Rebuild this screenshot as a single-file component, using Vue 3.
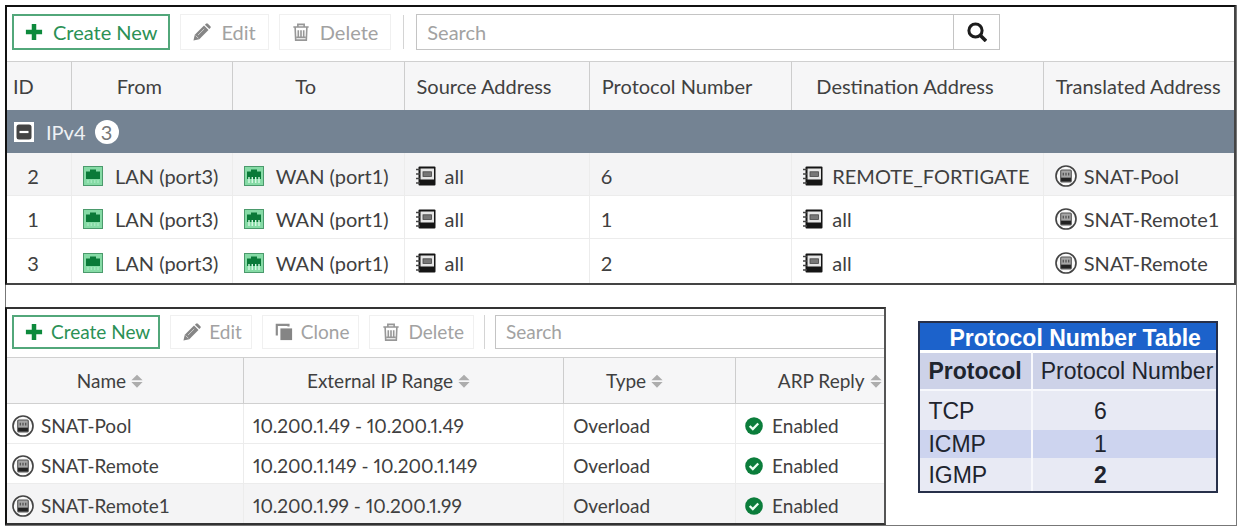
<script setup>
import { h } from 'vue'

const policies = [
  { id: 2, protocol: 6, destination: 'REMOTE_FORTIGATE', translated: 'SNAT-Pool' },
  { id: 1, protocol: 1, destination: 'all', translated: 'SNAT-Remote1' },
  { id: 3, protocol: 2, destination: 'all', translated: 'SNAT-Remote' },
]
const pools = [
  { name: 'SNAT-Pool', range: '10.200.1.49 - 10.200.1.49' },
  { name: 'SNAT-Remote', range: '10.200.1.149 - 10.200.1.149' },
  { name: 'SNAT-Remote1', range: '10.200.1.99 - 10.200.1.99' },
]
const poolColumns = ['Name', 'External IP Range', 'Type', 'ARP Reply']

const shapes = {
  plus: [['path', { d: 'M7.5 1h5v6.500H19v5h-6.500V19h-5v-6.500H1v-5h6.500z', fill: '#0d8a3c' }]],
  pencil: [
    ['path', { d: 'M0.500 19.500L2 13 12.200 2.800l5 5L7 18z', fill: '#858585' }],
    ['path', { d: 'M13.2 1.900L14.500.7q1-.9 2 0L19.300 3.500q.9 1 0 2L18.100 6.800z', fill: '#858585' }],
    ['path', { d: 'M5.500 13.500L12.500 6.500M3 14l3 3', stroke: '#d5d5d5', 'stroke-width': 1 }],
  ],
  trash: [
    ['path', { d: 'M1.500 4.500h17M6.500 4.500V1.500h7v3M3.500 5l.6 14h11.800L16.500 5M7 8v7M10 8v7M13 8v7M5 16h10', fill: 'none', stroke: '#979797', 'stroke-width': 1.8 }],
  ],
  clone: [
    ['path', { d: 'M2 14V2h13v2', fill: 'none', stroke: '#8c8c8c', 'stroke-width': 2.4 }],
    ['path', { d: 'M6 6h13v13H6z', fill: '#858585' }],
  ],
  search: [
    ['circle', { cx: 8.5, cy: 8.5, r: 6.6, fill: 'none', stroke: '#1c1c1c', 'stroke-width': 3 }],
    ['path', { d: 'M13 13l6 6', stroke: '#1c1c1c', 'stroke-width': 3.6 }],
  ],
  port: [
    ['rect', { x: 0.5, y: 0.5, width: 19, height: 19, fill: '#86dba6', stroke: '#4b9a6c' }],
    ['path', { d: 'M3 5.500h4V3.500h6v2h4V13H3z', fill: '#0a7a38' }],
    ['path', { d: 'M5 14v3M8.300 14v3M11.700 14v3M15 14v3', stroke: '#a5e8bf', 'stroke-width': 1.4 }],
  ],
  wan: [
    ['rect', { x: 0.5, y: 0.5, width: 19, height: 19, fill: '#86dba6', stroke: '#4b9a6c' }],
    ['path', { d: 'M3 5.500h4V3.500h6v2h4V13H3z', fill: '#0a7a38' }],
    ['path', { d: 'M5 11v6M8.300 11v6M11.700 11v6M15 11v6', stroke: '#d5f8e2', 'stroke-width': 1.4 }],
  ],
  book: [
    ['rect', { x: 2.5, y: 0.5, width: 17, height: 19, rx: 1, fill: '#151515' }],
    ['rect', { x: 4.500, y: 2.500, width: 13.500, height: 11, fill: '#e6e6e6' }],
    ['rect', { x: 7, y: 5.800, width: 8.500, height: 4.600, fill: '#777', stroke: '#444', 'stroke-width': 0.8 }],
    ['path', { d: 'M0 3.500h4M0 8h4M0 12.500h4M0 17h4', stroke: '#444', 'stroke-width': 1.6 }],
  ],
  pool: [
    ['circle', { cx: 10, cy: 10, r: 9.1, fill: '#fafafa', stroke: '#444', 'stroke-width': 1.500 }],
    ['rect', { x: 5.200, y: 4.500, width: 9.600, height: 11, rx: 1, fill: '#a5a5a5', stroke: '#555' }],
    ['path', { d: 'M7.500 7v2.500M10 7v2.500M12.500 7v2.500', stroke: '#444' }],
    ['path', { d: 'M5.500 11.500h9V15h-9z', fill: '#222' }],
  ],
  check: [
    ['circle', { cx: 10, cy: 10, r: 9.8, fill: '#0b7d3b' }],
    ['path', { d: 'M5.200 10l3.500 3.500 6-6.300', fill: 'none', stroke: '#eafff2', 'stroke-width': 2.500 }],
  ],
  sort: [
    ['path', { d: 'M2 9l8-8 8 8zM2 11.500h16l-8 8z', fill: '#adadad' }],
  ],
  collapse: [
    ['rect', { x: 0, y: 0, width: 20, height: 20, fill: '#fff' }],
    ['rect', { x: 2.500, y: 2.500, width: 15, height: 15, rx: 2.500, fill: '#444' }],
    ['path', { d: 'M5.500 10h9', stroke: '#fff', 'stroke-width': 2.200 }],
  ],
}

const Icon = (props) =>
  h('svg', { viewBox: '0 0 20 20', 'aria-hidden': 'true' }, shapes[props.name].map(([tag, attrs]) => h(tag, attrs)))
Icon.props = ['name']
</script>

<template>
  <main class="frame">
    <section class="panel policies">
      <div class="toolbar">
        <button class="btn create"><Icon name="plus" class="icon" />Create New</button>
        <button class="btn" disabled><Icon name="pencil" class="icon" />Edit</button>
        <button class="btn" disabled><Icon name="trash" class="icon" />Delete</button>
        <span class="divider"></span>
        <div class="search">
          <input type="text" placeholder="Search" aria-label="Search policies" />
          <button class="go" aria-label="Run search"><Icon name="search" class="icon" /></button>
        </div>
      </div>
      <table class="grid">
        <colgroup>
          <col class="c-id" /><col class="c-from" /><col class="c-to" /><col class="c-source" />
          <col class="c-protocol" /><col class="c-destination" /><col />
        </colgroup>
        <thead>
          <tr>
            <th class="start id">ID</th>
            <th class="offset">From</th>
            <th class="offset">To</th>
            <th class="start">Source Address</th>
            <th class="start">Protocol Number</th>
            <th class="offset">Destination Address</th>
            <th class="start">Translated Address</th>
          </tr>
        </thead>
        <tbody>
          <tr class="group">
            <td colspan="7">
              <div class="cell">
                <button class="toggle" aria-label="Collapse IPv4"><Icon name="collapse" class="icon" /></button>
                IPv4 <span class="count">3</span>
              </div>
            </td>
          </tr>
          <tr v-for="p in policies" :key="p.id">
            <td class="number">{{ p.id }}</td>
            <td><div class="cell port"><Icon name="port" class="icon" />LAN (port3)</div></td>
            <td><div class="cell port"><Icon name="wan" class="icon" />WAN (port1)</div></td>
            <td><div class="cell"><Icon name="book" class="icon" />all</div></td>
            <td>{{ p.protocol }}</td>
            <td><div class="cell"><Icon name="book" class="icon" />{{ p.destination }}</div></td>
            <td><div class="cell pool"><Icon name="pool" class="icon round" />{{ p.translated }}</div></td>
          </tr>
        </tbody>
      </table>
    </section>

    <div class="lower">
      <section class="panel pools">
        <div class="toolbar">
          <button class="btn create"><Icon name="plus" class="icon" />Create New</button>
          <button class="btn" disabled><Icon name="pencil" class="icon" />Edit</button>
          <button class="btn" disabled><Icon name="clone" class="icon" />Clone</button>
          <button class="btn" disabled><Icon name="trash" class="icon" />Delete</button>
          <span class="divider"></span>
          <div class="search">
            <input type="text" placeholder="Search" aria-label="Search IP pools" />
          </div>
        </div>
        <table class="grid">
          <colgroup><col class="c-name" /><col class="c-range" /><col class="c-type" /><col /></colgroup>
          <thead>
            <tr>
              <th v-for="c in poolColumns" :key="c">
                <div class="sortable">{{ c }}<Icon name="sort" class="sort" /></div>
              </th>
            </tr>
          </thead>
          <tbody>
            <tr v-for="p in pools" :key="p.name">
              <td><div class="cell pool"><Icon name="pool" class="icon round" />{{ p.name }}</div></td>
              <td class="range">{{ p.range }}</td>
              <td>Overload</td>
              <td><div class="cell status"><Icon name="check" class="icon" />Enabled</div></td>
            </tr>
          </tbody>
        </table>
      </section>

      <aside class="side">
        <table class="numbers">
          <caption>Protocol Number Table</caption>
          <colgroup><col class="c-proto" /><col /></colgroup>
          <thead>
            <tr><th scope="col">Protocol</th><th scope="col">Protocol Number</th></tr>
          </thead>
          <tbody>
            <tr class="tall"><td>TCP</td><td>6</td></tr>
            <tr class="tint"><td>ICMP</td><td>1</td></tr>
            <tr class="last"><td>IGMP</td><td>2</td></tr>
          </tbody>
        </table>
      </aside>
    </div>
  </main>
</template>

<style>
body {
  background: #fff;
}
</style>

<style scoped>
.frame {
  box-sizing: border-box;
  margin: 5px 1px 3px 5px;
  border: 1px solid #777;
  border-top: 0;
  border-left: 0;
  font-family: Lato, "Liberation Sans", sans-serif;
  font-size: 20px;
  line-height: 24px;
  color: #404040;
}
.panel {
  box-sizing: border-box;
  border: 2px solid #111;
  overflow: hidden;
}
.policies {
  border-color: #111 #444 #444 #111;
}
.toolbar {
  display: flex;
  align-items: center;
  gap: 10px;
  padding: 7px 5px 11px;
}
.btn {
  display: flex;
  align-items: center;
  flex: none;
  box-sizing: border-box;
  height: 36px;
  gap: 10px;
  padding: 0 12px;
  border: 1px solid #f0f0f0;
  background: #fff;
  font: inherit;
  color: #a2a2a2;
  white-space: nowrap;
}
.btn.create {
  padding: 0 11px;
  border: 2px solid #52a77a;
  color: #2b9155;
}
.icon {
  flex: none;
  display: block;
  width: 20px;
  height: 20px;
}
.icon.round {
  width: 22px;
  height: 22px;
}
.btn .icon {
  width: 18px;
  height: 18px;
}
.divider {
  width: 1px;
  height: 34px;
  margin: 0 2px;
  background: #d4d4d4;
}
.search {
  display: flex;
  box-sizing: border-box;
  height: 36px;
  width: 48%;
  border: 1px solid #c4c4c4;
}
.search input {
  flex: 1;
  min-width: 0;
  padding: 0 10px;
  border: 0;
  background: #fff;
  font: inherit;
  color: #404040;
}
.search input::placeholder {
  color: #a2a2a2;
  opacity: 1;
}
.go {
  display: flex;
  align-items: center;
  justify-content: center;
  width: 46px;
  padding: 0;
  border: 0;
  border-left: 1px solid #c4c4c4;
  background: #fff;
}
.grid {
  width: 100%;
  table-layout: fixed;
  border-collapse: separate;
  border-spacing: 0;
}
.c-id { width: 5.3%; }
.c-from { width: 13.1%; }
.c-to { width: 14%; }
.c-source { width: 15.1%; }
.c-protocol { width: 16.5%; }
.c-destination { width: 20.5%; }
.c-name { width: 27%; }
.c-range { width: 36.5%; }
.c-type { width: 19.6%; }
.grid th,
.grid td {
  box-sizing: border-box;
  height: 43px;
  padding: 4px 0 0 11px;
  border-right: 1px solid #ececec;
  border-bottom: 1px solid #ececec;
  text-align: left;
  white-space: nowrap;
}
.grid th {
  height: 49px;
  padding: 0 12px;
  border-top: 1px solid #d0d0d0;
  border-right-color: #cdcdcd;
  border-bottom: 0;
  background: #f6f6f7;
  font-weight: 400;
  text-align: center;
}
.grid th.start {
  padding-right: 0;
  text-align: left;
}
.grid th.id {
  padding-left: 6px;
}
.grid th.offset {
  padding-right: 37px;
}
.grid tr > :last-child {
  border-right: 0;
}
.grid tbody tr:last-child td {
  border-bottom: 0;
}
.policies tbody tr:last-child td {
  height: 44px;
}
.grid td.number {
  padding-left: 0;
  padding-right: 12px;
  text-align: center;
}
.policies tbody tr:nth-child(2) td,
.pools tbody tr:last-child td {
  background: #f4f4f5;
}
.grid .group td {
  padding: 0 0 0 7px;
  border: 0;
  background: #748393;
  color: #eef1f4;
}
.cell {
  display: flex;
  align-items: center;
  gap: 9px;
}
.cell.port {
  gap: 12px;
}
.cell.pool {
  gap: 7px;
}
.toggle {
  padding: 0 3px 0 0;
  border: 0;
  background: none;
}
.count {
  width: 24px;
  border-radius: 12px;
  background: #fff;
  color: #777;
  text-align: center;
}
.lower {
  display: flex;
  padding-top: 22px;
  box-shadow: inset 1px 0 #777;
}
.pools {
  width: 71.6%;
  border-color: #333 #555 #333 #111;
  font-size: 19px;
}
.pools .toolbar {
  padding: 6px 0 8px 5px;
}
.pools .btn {
  gap: 8px;
  padding: 0 9px 0 12px;
}
.pools .btn.create {
  padding: 0 8px 0 11px;
}
.pools .btn,
.pools .search {
  height: 34px;
}
.pools .divider {
  margin: 0;
}
.pools .search {
  flex: 1;
  border-right: 0;
}
.pools th {
  height: 47px;
  padding: 0 40px 0 11px;
  border-bottom: 1px solid #d0d0d0;
}
.pools th:last-child {
  padding: 0 0 0 40px;
}
.pools td {
  height: 40px;
  padding-left: 9px;
}
.pools tr:last-child td {
  height: 39px;
}
.pools td:first-child {
  padding-left: 5px;
}
.range {
  font-variant-numeric: proportional-nums;
}
.sortable {
  display: flex;
  align-items: center;
  justify-content: center;
  gap: 4px;
}
.sort {
  flex: none;
  width: 14px;
  height: 16px;
}
.status .icon {
  width: 18px;
  height: 18px;
}
.side {
  flex: 1;
  padding: 14px 18px 0 32px;
}
.numbers {
  width: 100%;
  table-layout: fixed;
  border: 2px solid #27304a;
  border-top: 0;
  border-collapse: separate;
  border-spacing: 0;
  font-family: "Liberation Sans", Arial, sans-serif;
  font-size: 23px;
  line-height: 24px;
  color: #20242e;
}
.numbers caption {
  padding: 3px 0 0 14px;
  border: 2px solid #27304a;
  border-bottom: 0;
  background: #1c62cb;
  color: #fff;
  font-weight: 700;
}
.c-proto { width: 38%; }
.numbers th,
.numbers td {
  height: 28px;
  padding: 0 0 0 8px;
  border-right: 2px solid #f7f8fc;
  background: #e8eaf4;
  text-align: left;
  white-space: nowrap;
}
.numbers th {
  height: 36px;
  border-top: 3px solid #fff;
  border-bottom: 2px solid #f7f8fc;
  background: #cdd2e8;
}
.numbers th:last-child {
  font-weight: 400;
}
.numbers tr > :last-child {
  border-right: 0;
}
.numbers td:last-child {
  padding: 0 48px 0 0;
  text-align: center;
}
.numbers .tall td {
  height: 39px;
}
.numbers .tint td {
  background: #cdd4ef;
}
.numbers .last td {
  height: 33px;
}
.numbers .last td:last-child {
  font-weight: 700;
}
</style>
